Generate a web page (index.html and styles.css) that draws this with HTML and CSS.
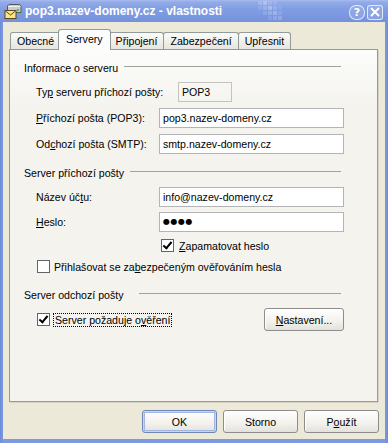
FILE: index.html
```html
<!DOCTYPE html>
<html lang="cs">
  <head>
    <meta charset="UTF-8" />
    <title>pop3.nazev-domeny.cz - vlastnosti</title>
    <link rel="stylesheet" href="styles.css">
  </head>
  <body>
    <main class="window">
      <header class="titlebar">
        <svg class="title-icon" width="18" height="17" viewBox="0 0 18 17">
          <path d="M5 1.5 H15.5 L17 3 V9.5 H3.5 V3 Z" fill="#c9cbcf" stroke="#55585e" />
          <path d="M4 3.5 H16.5" stroke="#f2f2f2" />
          <rect x="13" y="6" width="2" height="2" fill="#2fd23a" />
          <rect x="1" y="7.5" width="11" height="8" fill="#fbe48a" stroke="#5b4b1c" />
          <path d="M1.5 8 L6.5 12 L11.5 8" fill="none" stroke="#5b4b1c" />
        </svg>
        <span class="title-text">pop3.nazev-domeny.cz - vlastnosti</span>
        <svg class="title-pattern" width="30" height="22" viewBox="0 0 30 22">
          <g fill="#ffffff">
            <rect x="2" y="1" width="4" height="4" opacity="0.18" />
            <rect x="7" y="1" width="4" height="4" opacity="0.28" />
            <rect x="12" y="1" width="4" height="4" opacity="0.14" />
            <rect x="17" y="1" width="4" height="4" opacity="0.1" />
            <rect x="2" y="6" width="4" height="4" opacity="0.1" />
            <rect x="7" y="6" width="4" height="4" opacity="0.2" />
            <rect x="12" y="6" width="4" height="4" opacity="0.3" />
            <rect x="17" y="6" width="4" height="4" opacity="0.16" />
            <rect x="22" y="6" width="4" height="4" opacity="0.08" />
            <rect x="7" y="11" width="4" height="4" opacity="0.12" />
            <rect x="12" y="11" width="4" height="4" opacity="0.2" />
            <rect x="17" y="11" width="4" height="4" opacity="0.26" />
            <rect x="22" y="11" width="4" height="4" opacity="0.12" />
            <rect x="12" y="16" width="4" height="4" opacity="0.1" />
            <rect x="17" y="16" width="4" height="4" opacity="0.16" />
            <rect x="22" y="16" width="4" height="4" opacity="0.18" />
          </g>
        </svg>
        <div class="caption-buttons">
          <button class="caption-button is-help" aria-label="Nápověda">?</button>
          <button class="caption-button is-close" aria-label="Zavřít">
            <svg width="10" height="10" viewBox="0 0 10 10">
              <path d="M1 1 L9 9 M9 1 L1 9" stroke="#ffffff" stroke-width="2" />
            </svg>
          </button>
        </div>
      </header>

      <section class="client">
        <nav class="tabs">
          <div class="tab">Obecné</div>
          <div class="tab is-active">Servery</div>
          <div class="tab">Připojení</div>
          <div class="tab">Zabezpečení</div>
          <div class="tab">Upřesnit</div>
        </nav>

        <div class="panel">
          <div class="group-title">
            <span>Informace o serveru</span>
            <i class="rule is-first"></i>
          </div>
          <div class="field is-first">
            <label class="field-label is-wide">Ty<u>p</u> serveru příchozí pošty:</label>
            <div class="static-box">POP3</div>
          </div>
          <div class="field">
            <label class="field-label"><u>P</u>říchozí pošta (POP3):</label>
            <div class="text-box">pop3.nazev-domeny.cz</div>
          </div>
          <div class="field">
            <label class="field-label">Od<u>c</u>hozí pošta (SMTP):</label>
            <div class="text-box">smtp.nazev-domeny.cz</div>
          </div>

          <div class="group-title is-spaced">
            <span>Server příchozí pošty</span>
            <i class="rule is-second"></i>
          </div>
          <div class="field is-first">
            <label class="field-label">Název úč<u>t</u>u:</label>
            <div class="text-box">info@nazev-domeny.cz</div>
          </div>
          <div class="field is-tight">
            <label class="field-label"><u>H</u>eslo:</label>
            <div class="text-box is-password">●●●●</div>
          </div>
          <div class="check-row is-remember">
            <span class="check-box is-checked"></span>
            <span><u>Z</u>apamatovat heslo</span>
          </div>
          <div class="check-row is-spa">
            <span class="check-box"></span>
            <span>Přihlašovat se za<u>b</u>ezpečeným ověřováním hesla</span>
          </div>

          <div class="group-title is-spaced-more">
            <span>Server odchozí pošty</span>
            <i class="rule is-third"></i>
          </div>
          <div class="auth-row">
            <div class="check-row">
              <span class="check-box is-checked"></span>
              <span class="focus-label">Server požaduje o<u>v</u>ěření</span>
            </div>
            <button class="push-button is-settings"><u>N</u>astavení...</button>
          </div>
        </div>

        <footer class="dialog-buttons">
          <button class="push-button is-default">OK</button>
          <button class="push-button">Storno</button>
          <button class="push-button">P<u>o</u>užít</button>
        </footer>
      </section>
    </main>
  </body>
</html>
```

FILE: styles.css
```css
:root {
  --frame: #7b97e0;
  --face: #ece9d8;
  --panel: #f4f3ee;
  --tab-border: #919b9c;
  --field-border: #b2b4b8;
  --rule: #a2a29c;
}

* {
  box-sizing: border-box;
  margin: 0;
  padding: 0;
}

body {
  width: 388px;
  height: 443px;
  overflow: hidden;
  font-family: "Liberation Sans", Arial, sans-serif;
  font-size: 10.6px;
  color: #000000;
  background: var(--frame);
}

u {
  text-decoration-thickness: 1px;
  text-underline-offset: 1px;
}

.window {
  width: 388px;
  height: 443px;
  display: flex;
  flex-direction: column;
  background: linear-gradient(to right, #6e8bd9, #7d99e1 3px, #7d99e1 385px, #6e8bd9);
}

/* title bar */

.titlebar {
  position: relative;
  flex: none;
  height: 22px;
  display: flex;
  align-items: center;
  padding: 0 5px 0 4px;
  background: linear-gradient(#a9bcef 0, #93abe9 2px, #819de2 9px, #7b97e0 16px, #7591dc 22px);
}

.title-icon {
  flex: none;
  margin-top: 1px;
}

.title-text {
  margin-left: 3px;
  font-weight: bold;
  font-size: 12px;
  color: #ffffff;
  white-space: nowrap;
}

.title-pattern {
  position: absolute;
  left: 256px;
  top: 0;
}

.caption-buttons {
  margin-left: auto;
  display: flex;
  gap: 2px;
  margin-top: 2px;
}

.caption-button {
  width: 16px;
  height: 15px;
  border: 1px solid rgba(255, 255, 255, 0.75);
  border-radius: 3px;
  background: rgba(255, 255, 255, 0.12);
  color: #ffffff;
  font-family: "DejaVu Sans", sans-serif;
  font-weight: bold;
  font-size: 11px;
  line-height: 13px;
  display: flex;
  align-items: center;
  justify-content: center;
}

.caption-button.is-help {
  border-radius: 7px;
}

/* client area */

.client {
  flex: 1;
  margin: 0 3px 4px 3px;
  padding: 7px 7px 6px 6px;
  background: var(--face);
  display: flex;
  flex-direction: column;
}

.tabs {
  flex: none;
  height: 21px;
  margin-bottom: -1px;
  padding-left: 1px;
  display: flex;
  align-items: flex-start;
  position: relative;
  z-index: 1;
}

.tab {
  margin-top: 3px;
  height: 17px;
  padding: 0 6px;
  margin-right: -1px;
  border: 1px solid var(--tab-border);
  border-bottom: none;
  border-radius: 3px 3px 0 0;
  background: linear-gradient(#fbfbf9, #e6e5de);
  line-height: 16px;
  white-space: nowrap;
}

.tab.is-active {
  margin: 0 -2px 0 -2px;
  height: 21px;
  padding: 0 7px;
  background: #fcfcfe;
  line-height: 18px;
  position: relative;
  z-index: 2;
}

.panel {
  flex: 1;
  border: 1px solid var(--tab-border);
  background: linear-gradient(#fcfcfb, var(--panel) 60px);
  box-shadow: 1px 1px 0 #d6d3c4;
  padding: 11px 33px 0 14px;
  display: flex;
  flex-direction: column;
}

.group-title {
  height: 14px;
  line-height: 14px;
  margin-right: 3px;
  display: flex;
  justify-content: space-between;
  white-space: nowrap;
}

.group-title.is-spaced {
  margin-top: 12px;
}

.group-title.is-spaced-more {
  margin-top: 15px;
}

.rule {
  height: 1px;
  margin-top: 5px;
  background: var(--rule);
}

.rule.is-first {
  width: 217px;
}

.rule.is-second {
  width: 211px;
}

.rule.is-third {
  width: 202px;
}

.field {
  height: 20px;
  margin-top: 6px;
  padding-left: 12px;
  display: flex;
  align-items: center;
}

.field.is-first {
  margin-top: 7px;
}

.field.is-tight {
  margin-top: 5px;
}

.field-label {
  flex: none;
  width: 123px;
  white-space: nowrap;
}

.field-label.is-wide {
  width: 142px;
}

.static-box {
  width: 54px;
  height: 20px;
  border: 1px solid #c4c4be;
  padding: 0 3px;
  line-height: 18px;
}

.text-box {
  width: 185px;
  height: 20px;
  border: 1px solid var(--field-border);
  background: #ffffff;
  padding: 0 3px;
  line-height: 18px;
  white-space: nowrap;
}

.text-box.is-password {
  font-family: "DejaVu Sans", sans-serif;
  font-size: 8px;
  letter-spacing: 0.5px;
}

.check-row {
  height: 13px;
  display: flex;
  align-items: center;
  white-space: nowrap;
}

.check-row.is-remember {
  margin-top: 7px;
  padding-left: 137px;
  gap: 5px;
}

.check-row.is-spa {
  margin-top: 8px;
  padding-left: 13px;
  gap: 4px;
}

.check-box {
  flex: none;
  width: 13px;
  height: 13px;
  border: 1px solid #62666b;
  background: #ffffff;
  position: relative;
}

.check-box.is-checked::after {
  content: "";
  position: absolute;
  left: 3px;
  top: 0px;
  width: 3px;
  height: 7px;
  border: solid #000000;
  border-width: 0 2px 2px 0;
  transform: rotate(40deg);
}

.auth-row {
  margin-top: 6px;
  height: 23px;
  padding-left: 13px;
  display: flex;
  align-items: center;
  justify-content: space-between;
}

.auth-row .check-row {
  gap: 3px;
}

.focus-label {
  border: 1px dotted #000000;
  padding: 0 1px;
  line-height: 12px;
}

/* buttons */

.push-button {
  width: 75px;
  height: 23px;
  border: 1px solid #8c8d8c;
  border-radius: 3px;
  background: linear-gradient(#ffffff, #f2f1ec 60%, #e3e1da);
  box-shadow: inset 1px 1px 0 #ffffff;
  font: inherit;
  color: #000000;
}

.push-button.is-settings {
  width: 80px;
}

.push-button.is-default {
  border-color: #7086b6;
  box-shadow: inset 0 0 0 1px #c9d6f1, inset 0 0 0 2px #a3b6e0;
}

.dialog-buttons {
  flex: none;
  margin: 8px -1px 0 0;
  display: flex;
  justify-content: flex-end;
  gap: 6px;
}
```
